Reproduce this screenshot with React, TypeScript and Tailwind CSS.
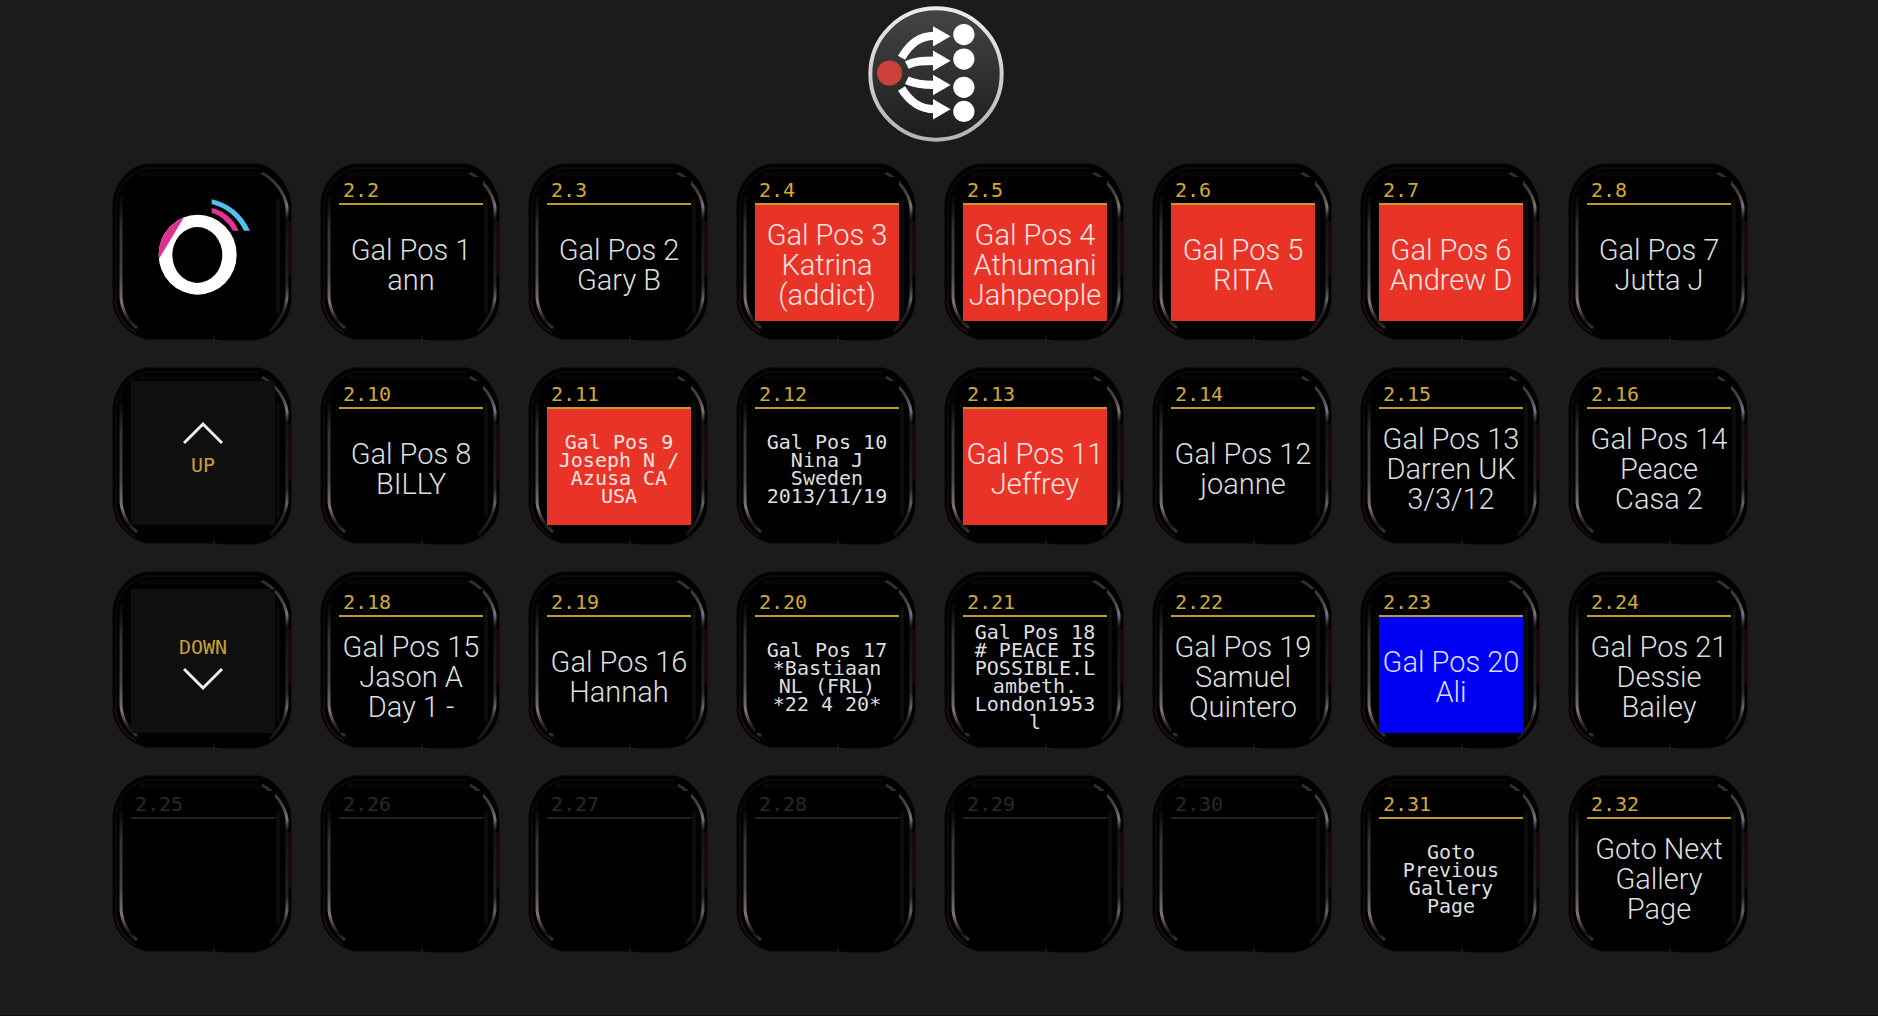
import React from "react";

type Key = {
  id: string;
  label?: string;
  small?: boolean;
  tone?: "red" | "blue";
  kind?: "home" | "up" | "down";
};

type Row = { pad: string; keys: Key[] };

const rows: Row[] = [
  {
    pad: "pt-[14px]",
    keys: [
      { id: "2.1", kind: "home" },
      { id: "2.2", label: "Gal Pos 1\nann" },
      { id: "2.3", label: "Gal Pos 2\nGary B" },
      { id: "2.4", label: "Gal Pos 3\nKatrina\n(addict)", tone: "red" },
      { id: "2.5", label: "Gal Pos 4\nAthumani\nJahpeople", tone: "red" },
      { id: "2.6", label: "Gal Pos 5\nRITA", tone: "red" },
      { id: "2.7", label: "Gal Pos 6\nAndrew D", tone: "red" },
      { id: "2.8", label: "Gal Pos 7\nJutta J" },
    ],
  },
  {
    pad: "pt-[14px]",
    keys: [
      { id: "2.9", kind: "up" },
      { id: "2.10", label: "Gal Pos 8\nBILLY" },
      { id: "2.11", label: "Gal Pos 9\nJoseph N /\nAzusa CA\nUSA", small: true, tone: "red" },
      { id: "2.12", label: "Gal Pos 10\nNina J\nSweden\n2013/11/19", small: true },
      { id: "2.13", label: "Gal Pos 11\nJeffrey", tone: "red" },
      { id: "2.14", label: "Gal Pos 12\njoanne" },
      { id: "2.15", label: "Gal Pos 13\nDarren UK\n3/3/12" },
      { id: "2.16", label: "Gal Pos 14\nPeace\nCasa 2" },
    ],
  },
  {
    pad: "pt-[18px]",
    keys: [
      { id: "2.17", kind: "down" },
      { id: "2.18", label: "Gal Pos 15\nJason A\nDay 1 -" },
      { id: "2.19", label: "Gal Pos 16\nHannah" },
      { id: "2.20", label: "Gal Pos 17\n*Bastiaan\nNL (FRL)\n*22 4 20*", small: true },
      { id: "2.21", label: "Gal Pos 18\n# PEACE IS\nPOSSIBLE.L\nambeth.\nLondon1953\nl", small: true },
      { id: "2.22", label: "Gal Pos 19\nSamuel\nQuintero" },
      { id: "2.23", label: "Gal Pos 20\nAli", tone: "blue" },
      { id: "2.24", label: "Gal Pos 21\nDessie\nBailey" },
    ],
  },
  {
    pad: "pt-[16px]",
    keys: [
      { id: "2.25" },
      { id: "2.26" },
      { id: "2.27" },
      { id: "2.28" },
      { id: "2.29" },
      { id: "2.30" },
      { id: "2.31", label: "Goto\nPrevious\nGallery\nPage", small: true },
      { id: "2.32", label: "Goto Next\nGallery\nPage" },
    ],
  },
];

const mono = "font-['DejaVu_Sans_Mono','Liberation_Mono',monospace]";
const sans = "font-['Roboto','Liberation_Sans',sans-serif] font-light";

function BrandLogo() {
  return (
    <svg viewBox="54 16 410 410" className="size-[136px]" role="img" aria-label="Companion">
      <defs>
        <linearGradient id="disc" x1="0" y1="0" x2="0" y2="1">
          <stop offset="0" stopColor="#454545" />
          <stop offset="1" stopColor="#1c1c1c" />
        </linearGradient>
        <linearGradient id="ring" x1="0" y1="0" x2="0" y2="1">
          <stop offset="0" stopColor="#ececec" />
          <stop offset="1" stopColor="#b4b4b4" />
        </linearGradient>
      </defs>
      <circle cx="259" cy="221" r="198" fill="url(#disc)" stroke="url(#ring)" strokeWidth="12" />
      <g fill="none" stroke="#fff" strokeWidth="25">
        <path d="M155 172C181 128 210 106 254 106" />
        <path d="M171 194C196 182 218 181 254 181" />
        <path d="M171 240C196 252 218 254 254 254" />
        <path d="M155 265C181 306 210 327 254 327" />
      </g>
      <g fill="#fff">
        <path d="M250 77L303 107L250 138Z" />
        <path d="M250 150L303 181L250 212Z" />
        <path d="M250 223L303 254L250 285Z" />
        <path d="M250 296L303 327L250 358Z" />
        <circle cx="343" cy="102" r="32" />
        <circle cx="343" cy="176" r="32" />
        <circle cx="343" cy="261" r="32" />
        <circle cx="343" cy="334" r="32" />
      </g>
      <circle cx="119" cy="218" r="38" fill="#cb4038" />
    </svg>
  );
}

function Bezel() {
  return (
    <svg viewBox="0 0 180 178" className="absolute inset-0 size-full" fill="none" aria-hidden="true">
      <defs>
        <linearGradient id="leftGlow" gradientUnits="userSpaceOnUse" x1="0" y1="30" x2="0" y2="168">
          <stop offset="0" stopColor="#2c292a" stopOpacity="0" />
          <stop offset="0.25" stopColor="#343132" />
          <stop offset="0.6" stopColor="#484445" />
          <stop offset="0.8" stopColor="#7d7677" />
          <stop offset="0.92" stopColor="#1c1615" />
          <stop offset="1" stopColor="#443c3a" />
        </linearGradient>
        <linearGradient id="rightGlow" gradientUnits="userSpaceOnUse" x1="0" y1="8" x2="0" y2="170">
          <stop offset="0" stopColor="#2a2a2c" />
          <stop offset="0.15" stopColor="#4a4444" />
          <stop offset="0.22" stopColor="#7c7777" />
          <stop offset="0.29" stopColor="#111" />
          <stop offset="0.36" stopColor="#151414" />
          <stop offset="0.7" stopColor="#242222" />
          <stop offset="0.79" stopColor="#686263" />
          <stop offset="0.86" stopColor="#262323" />
          <stop offset="1" stopColor="#151212" />
        </linearGradient>
      </defs>
      <path
        d="M34 1H146C164 4 178 24 179 42V138C178 156 164 174 142 177H112L102 176H34C16 172 2 156 1 138V40C3 20 16 4 34 1Z"
        fill="#020101"
        stroke="#080504"
      />
      <path d="M4 138V42C5 24 18 8 34 5H146" stroke="#0f0809" strokeWidth="2" />
      <path d="M28 11H150" stroke="#070506" strokeWidth="4" />
      <path d="M9 30V134C10 148 16 158 25 165" stroke="url(#leftGlow)" strokeWidth="3" />
      <path d="M3 138C5 152 12 163 24 170" stroke="#1c0f0c" strokeWidth="2" />
      <path d="M150 10C163 17 173 30 175 44V134C174 148 168 158 158 168" stroke="url(#rightGlow)" strokeWidth="3" />
      <path d="M178 58V112" stroke="#1c0809" strokeWidth="3" />
      <path d="M166 36V150" stroke="#0b0c0b" strokeWidth="4" />
      <path d="M102 173V177" stroke="#2a2523" strokeWidth="1" />
    </svg>
  );
}

function HomeScreen() {
  return (
    <svg viewBox="90 84 432 432" className="size-full" role="img" aria-label="Home">
      <defs>
        <clipPath id="cut">
          <path d="M248 206L175 328H150V180H248Z" />
        </clipPath>
      </defs>
      <ellipse cx="290" cy="317" rx="117" ry="120" fill="#fff" />
      <ellipse cx="290" cy="317" rx="117" ry="120" fill="#e0308f" clipPath="url(#cut)" />
      <ellipse cx="289" cy="318" rx="75" ry="84" fill="#000" />
      <path d="M332 151Q410 168 447 245H429Q398 182 332 165Z" fill="#56bff0" />
      <path d="M332 177Q388 190 413 245H396Q373 204 332 191Z" fill="#e8309c" />
    </svg>
  );
}

function Chevron({ d }: { d: string }) {
  return (
    <svg viewBox="0 0 40 24" className="h-6 w-10" fill="none" stroke="#f0f0f0" strokeWidth="3" aria-hidden="true">
      <path d={d} />
    </svg>
  );
}

function Screen({ item }: { item: Key }) {
  if (item.kind === "home") return <HomeScreen />;
  if (item.kind === "up")
    return (
      <span className="flex h-full flex-col items-center justify-center gap-2 bg-[#0f0f0f] pb-2">
        <Chevron d="M1 22L20 3L39 22" />
        <span className={`${mono} text-[20px] leading-6 text-[#c9a02f]`}>UP</span>
      </span>
    );
  if (item.kind === "down")
    return (
      <span className="flex h-full flex-col items-center justify-center gap-2 bg-[#0f0f0f] pt-1">
        <span className={`${mono} text-[20px] leading-6 text-[#c9a02f]`}>DOWN</span>
        <Chevron d="M1 2L20 21L39 2" />
      </span>
    );

  const empty = !item.label;
  const fill = item.tone === "red" ? "bg-[#e93326]" : item.tone === "blue" ? "bg-[#0000f5]" : "bg-black";
  const ink = item.tone === "red" ? "text-[#fde4e2]" : item.tone === "blue" ? "text-[#dcdcfd]" : "text-[#dedede]";
  return (
    <span className="flex h-full flex-col bg-black">
      <span
        className={`${mono} h-7 border-b-2 pl-1 text-left text-[20px] leading-[26px] ${
          empty ? "border-[#1f1f1f] text-[#292929]" : "border-[#c19a2e] text-[#d3a932]"
        }`}
      >
        {item.id}
      </span>
      <span className={`flex flex-1 items-center justify-center pt-1 text-center whitespace-pre ${fill} ${ink}`}>
        <span className={item.small ? `${mono} text-[20px] leading-[18px]` : `${sans} text-[29px] leading-[30px]`}>
          {item.label}
        </span>
      </span>
    </span>
  );
}

export default function App() {
  return (
    <div className="flex min-h-screen flex-col items-center border-b border-[#0c0c0c] bg-[#1b1b1b] pt-1.5">
      <header className="pr-1.5">
        <BrandLogo />
      </header>
      <main className="mt-[21px] grid grid-cols-8 gap-x-7 gap-y-[26px] pr-[18px]">
        {rows.map((row) =>
          row.keys.map((item) => (
            <button
              key={item.id}
              type="button"
              disabled={!item.kind && !item.label}
              aria-label={item.kind ? item.kind : item.label ? undefined : `Empty ${item.id}`}
              className={`relative flex h-[178px] w-[180px] items-start justify-center pl-0.5 ${row.pad}`}
            >
              <Bezel />
              <span className="relative size-36">
                <Screen item={item} />
              </span>
            </button>
          ))
        )}
      </main>
    </div>
  );
}
